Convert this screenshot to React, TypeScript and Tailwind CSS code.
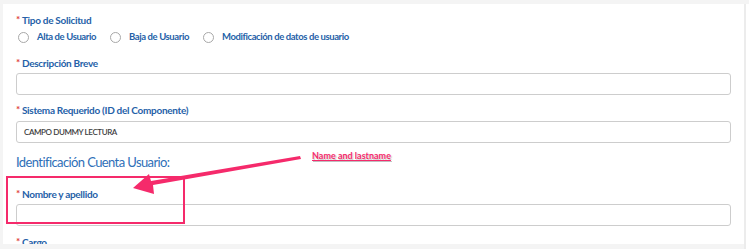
const Label = ({ text }: { text: string }) => (
  <div className="flex items-start leading-[14px] text-[10px] font-bold text-[#2561a8] tracking-[-0.3px]">
    <span className="text-[#e0403a] text-[10px] mr-[2px] leading-[12px]">*</span>
    {text}
  </div>
);

const Radio = ({ text }: { text: string }) => (
  <label className="flex items-center gap-[8px] mr-[14px]">
    <span className="w-[11px] h-[11px] rounded-full border border-[#a8a8a8] bg-white" />
    <span className="text-[9.5px] font-bold text-[#2561a8] tracking-[-0.4px]">{text}</span>
  </label>
);

const Field = ({ value }: { value?: string }) => (
  <div className="h-[22px] rounded-[3px] border border-[#cdcdcd] bg-white flex items-center px-[7px] text-[8px] font-semibold text-[#3d3d3d] tracking-[-0.4px]">
    {value}
  </div>
);

export default function App() {
  return (
    <div className="w-[749px] h-[249px] bg-[#f4f4f4] flex pt-[4px] pl-[3px] overflow-hidden font-['Lato',sans-serif]">
      <div className="relative w-[741px] h-[240px] bg-white overflow-hidden px-[13px] pt-[9px]">
        <Label text="Tipo de Solicitud" />
        <div className="flex items-center mt-[3px] h-[14px] pl-[2px]">
          <Radio text="Alta de Usuario" />
          <Radio text="Baja de Usuario" />
          <Radio text="Modificación de datos de usuario" />
        </div>

        <div className="mt-[12px] mb-[3px]">
          <Label text="Descripción Breve" />
        </div>
        <Field />

        <div className="mt-[8px] mb-[4px]">
          <Label text="Sistema Requerido (ID del Componente)" />
        </div>
        <Field value="CAMPO DUMMY LECTURA" />

        <h2 className="mt-[10px] text-[13px] leading-[18px] text-[#2f6fb8] tracking-[-0.6px]">
          Identificación Cuenta Usuario:
        </h2>

        <div className="mt-[16px] mb-[3px]">
          <Label text="Nombre y apellido" />
        </div>
        <Field />

        <div className="mt-[9px]">
          <Label text="Cargo" />
        </div>

        {/* annotation */}
        <div className="absolute left-[3px] top-[172px] w-[179px] h-[48px] border-2 border-[#f52a6b]" />
        <svg className="absolute left-0 top-0" width="741" height="240" viewBox="0 0 741 240">
          <polygon
            points="297,152 298,155 150,181 151,190 130,184 146,170 148,177"
            fill="#f52a6b"
          />
        </svg>
        <div
          className="absolute left-[309px] top-[146px] text-[9px] font-bold text-[#f52a6b] underline leading-[12px]"
          style={{ textShadow: "0 0 1px #fff, 1px 1px 1px rgba(0,0,0,0.25)" }}
        >
          Name and lastname
        </div>
      </div>
      <div className="w-[2px] h-full bg-[#ececec]" />
      <div className="w-[3px] h-full bg-white" />
    </div>
  );
}
